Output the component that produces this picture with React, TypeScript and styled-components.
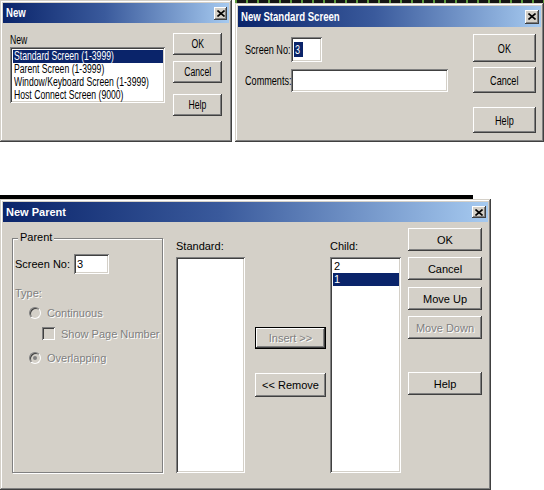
import styled, { createGlobalStyle, css } from 'styled-components'

const FACE = '#d4d0c8'
const SHADOW = '#808080'
const DARK = '#404040'
const NAVY = '#0a246a'

const FONT = `"Liberation Sans", Arial, sans-serif`

const GlobalStyle = createGlobalStyle`
  * { box-sizing: border-box; }
  body {
    margin: 0;
    background: #fff;
  }
`

const raised = css`
  box-shadow: inset -1px -1px ${DARK}, inset 1px 1px #fff,
    inset -2px -2px ${SHADOW}, inset 2px 2px ${FACE};
`

const sunken = css`
  box-shadow: inset 1px 1px ${SHADOW}, inset -1px -1px #fff,
    inset 2px 2px ${DARK}, inset -2px -2px ${FACE};
`

const Page = styled.div`
  width: 544px;
  height: 490px;
  overflow: hidden;
  display: flex;
  flex-direction: column;
`

const TopRow = styled.div`
  display: flex;
  gap: 3px;
  height: 142px;
`

const Stack = styled.div`
  display: flex;
  flex-direction: column;
`

const Ruler = styled.div<{ $w: number }>`
  width: ${p => p.$w}px;
  height: 3px;
  background: repeating-linear-gradient(90deg, #5c9a3c 0 2px, #141414 2px 11px);
`

const Band = styled.div`
  width: 473px;
  height: 4px;
  margin-top: 53px;
  background: #000;
`

// the two small dialogs use a condensed face; squeeze the text horizontally
const Narrow = styled.span<{ $scale?: number; $origin?: string }>`
  display: inline-block;
  white-space: nowrap;
  transform: scaleX(${p => p.$scale ?? 0.72});
  transform-origin: ${p => p.$origin ?? 'left'} center;
`

const Window = styled.div<{ $w: number; $h: number; $size: number }>`
  width: ${p => p.$w}px;
  height: ${p => p.$h}px;
  padding: 3px;
  display: flex;
  flex-direction: column;
  background: ${FACE};
  color: #000;
  font-family: ${FONT};
  font-size: ${p => p.$size}px;
  box-shadow: inset -1px -1px ${DARK}, inset 1px 1px ${FACE},
    inset -2px -2px ${SHADOW}, inset 2px 2px #fff;
`

const TitleBar = styled.div<{ $h: number }>`
  height: ${p => p.$h}px;
  flex-shrink: 0;
  display: flex;
  align-items: center;
  justify-content: space-between;
  padding: 0 2px 0 3px;
  background: linear-gradient(90deg, ${NAVY} 0%, #3a5a9c 45%, #a6caf0 100%);
  color: #fff;
  font-weight: bold;
  overflow: hidden;
`

const TitleText = styled.span<{ $size?: number }>`
  flex: 1;
  min-width: 0;
  white-space: nowrap;
  font-size: ${p => (p.$size ? `${p.$size}px` : 'inherit')};
`

const CloseBox = styled.div<{ $w: number; $h: number }>`
  width: ${p => p.$w}px;
  height: ${p => p.$h}px;
  flex-shrink: 0;
  display: flex;
  align-items: center;
  justify-content: center;
  background: ${FACE};
  ${raised}
`

const Close = ({ w = 14, h = 13 }: { w?: number; h?: number }) => (
  <CloseBox $w={w} $h={h}>
    <svg width="8" height="7" viewBox="0 0 8 7">
      <path d="M0.5 0.5 L7.5 6.5 M7.5 0.5 L0.5 6.5" stroke="#000" strokeWidth="1.6" />
    </svg>
  </CloseBox>
)

const Body = styled.div<{ $pad: string }>`
  flex: 1;
  display: flex;
  padding: ${p => p.$pad};
  min-height: 0;
`

const Column = styled.div<{ $w?: number; $ml?: number; $mt?: number; $gap?: number }>`
  display: flex;
  flex-direction: column;
  width: ${p => (p.$w ? `${p.$w}px` : 'auto')};
  flex: ${p => (p.$w ? '0 0 auto' : '1')};
  margin-left: ${p => p.$ml ?? 0}px;
  margin-top: ${p => p.$mt ?? 0}px;
  gap: ${p => p.$gap ?? 0}px;
`

const Label = styled.div<{ $lh?: number; $w?: number; $mt?: number; $disabled?: boolean }>`
  line-height: ${p => p.$lh ?? 13}px;
  width: ${p => (p.$w ? `${p.$w}px` : 'auto')};
  margin-top: ${p => p.$mt ?? 0}px;
  white-space: nowrap;
  flex-shrink: 0;
  ${p =>
    p.$disabled &&
    css`
      color: ${SHADOW};
      text-shadow: 1px 1px #fff;
    `}
`

const Button = styled.button<{ $h?: number; $mt?: number; $framed?: boolean }>`
  width: 100%;
  height: ${p => p.$h ?? 23}px;
  margin-top: ${p => p.$mt ?? 0}px;
  padding: 0;
  border: ${p => (p.$framed ? '1px solid #000' : 'none')};
  background: ${FACE};
  font: inherit;
  color: #000;
  overflow: hidden;
  ${raised}
  &:disabled {
    color: ${SHADOW};
    text-shadow: 1px 1px #fff;
  }
`

const Field = styled.div<{ $w: number; $h: number }>`
  width: ${p => p.$w}px;
  height: ${p => p.$h}px;
  flex-shrink: 0;
  display: flex;
  align-items: center;
  padding: 0 3px;
  background: #fff;
  ${sunken}
`

const Selection = styled.span`
  background: ${NAVY};
  color: #fff;
  padding: 0 1px;
`

const ListBox = styled.div<{ $h?: number; $mt?: number }>`
  height: ${p => (p.$h ? `${p.$h}px` : 'auto')};
  flex: ${p => (p.$h ? '0 0 auto' : '1')};
  margin-top: ${p => p.$mt ?? 0}px;
  padding: 3px 2px 2px 3px;
  background: #fff;
  overflow: hidden;
  ${sunken}
`

const ListItem = styled.div<{ $selected?: boolean; $lh?: number }>`
  line-height: ${p => p.$lh ?? 13}px;
  padding-left: 1px;
  white-space: nowrap;
  background: ${p => (p.$selected ? NAVY : 'transparent')};
  color: ${p => (p.$selected ? '#fff' : '#000')};
`

const FormRow = styled.div<{ $mt?: number }>`
  display: flex;
  align-items: center;
  margin-top: ${p => p.$mt ?? 0}px;
`

const GroupBox = styled.div`
  position: relative;
  width: 151px;
  margin-top: 10px;
  padding: 15px 0 0 2px;
  display: flex;
  flex-direction: column;
  border: 1px solid ${SHADOW};
  box-shadow: inset 1px 1px #fff, 1px 1px #fff;
`

const Legend = styled.span`
  position: absolute;
  top: -8px;
  left: 5px;
  padding: 0 2px;
  background: ${FACE};
  line-height: 13px;
`

const OptionRow = styled.div<{ $indent: number; $mt: number }>`
  display: flex;
  align-items: center;
  gap: 6px;
  height: 13px;
  padding-left: ${p => p.$indent}px;
  margin-top: ${p => p.$mt}px;
  color: ${SHADOW};
  text-shadow: 1px 1px #fff;
  white-space: nowrap;
`

const Radio = styled.span<{ $checked?: boolean }>`
  width: 12px;
  height: 12px;
  flex-shrink: 0;
  border-radius: 50%;
  display: flex;
  align-items: center;
  justify-content: center;
  background: ${FACE};
  border: 1px solid;
  border-color: ${SHADOW} #fff #fff ${SHADOW};
  box-shadow: inset 1px 1px ${DARK};
  text-shadow: none;
  &::after {
    content: '';
    width: 4px;
    height: 4px;
    border-radius: 50%;
    background: ${p => (p.$checked ? SHADOW : 'transparent')};
  }
`

const Check = styled.span`
  width: 13px;
  height: 13px;
  flex-shrink: 0;
  background: ${FACE};
  ${sunken}
`

const newItems = [
  'Standard Screen (1-3999)',
  'Parent Screen (1-3999)',
  'Window/Keyboard Screen (1-3999)',
  'Host Connect Screen (9000)',
]

const NewDialog = () => (
  <Window $w={233} $h={142} $size={12}>
    <TitleBar $h={20}>
      <TitleText>
        <Narrow $scale={0.8}>New</Narrow>
      </TitleText>
      <Close w={13} h={13} />
    </TitleBar>
    <Body $pad="10px 0 0 7px">
      <Column $w={155}>
        <Label $lh={14}>
          <Narrow>New</Narrow>
        </Label>
        <ListBox $h={56}>
          {newItems.map((item, i) => (
            <ListItem key={item} $selected={i === 0}>
              <Narrow>{item}</Narrow>
            </ListItem>
          ))}
        </ListBox>
      </Column>
      <Column $w={49} $ml={8}>
        <Button $h={22}>
          <Narrow $origin="center">OK</Narrow>
        </Button>
        <Button $h={22} $mt={6}>
          <Narrow $origin="center">Cancel</Narrow>
        </Button>
        <Button $h={22} $mt={11}>
          <Narrow $origin="center">Help</Narrow>
        </Button>
      </Column>
    </Body>
  </Window>
)

const StandardDialog = () => (
  <Stack>
    <Ruler $w={309} />
    <Window $w={309} $h={139} $size={13}>
      <TitleBar $h={21}>
        <TitleText $size={12}>
          <Narrow $scale={0.8}>New Standard Screen</Narrow>
        </TitleText>
        <Close w={14} h={14} />
      </TitleBar>
      <Body $pad="7px 5px 0 7px">
        <Column $mt={3} $gap={7}>
          <FormRow>
            <Label $w={46}>
              <Narrow $scale={0.7}>Screen No:</Narrow>
            </Label>
            <Field $w={31} $h={25}>
              <Selection>
                <Narrow $scale={0.7}>3</Narrow>
              </Selection>
            </Field>
          </FormRow>
          <FormRow>
            <Label $w={46}>
              <Narrow $scale={0.7}>Comments:</Narrow>
            </Label>
            <Field $w={157} $h={23} />
          </FormRow>
        </Column>
        <Column $w={63}>
          <Button $h={28}>
            <Narrow $scale={0.7} $origin="center">OK</Narrow>
          </Button>
          <Button $h={26} $mt={5}>
            <Narrow $scale={0.7} $origin="center">Cancel</Narrow>
          </Button>
          <Button $h={26} $mt={14}>
            <Narrow $scale={0.7} $origin="center">Help</Narrow>
          </Button>
        </Column>
      </Body>
    </Window>
  </Stack>
)

const ParentDialog = () => (
  <Window $w={491} $h={291} $size={11}>
    <TitleBar $h={20}>
      <TitleText>New Parent</TitleText>
      <Close w={14} h={12} />
    </TitleBar>
    <Body $pad="6px 6px 14px 9px">
      <GroupBox>
        <Legend>Parent</Legend>
        <FormRow>
          <Label $w={59}>Screen No:</Label>
          <Field $w={35} $h={20}>3</Field>
        </FormRow>
        <Label $mt={13} $disabled>
          Type:
        </Label>
        <OptionRow $indent={14} $mt={6}>
          <Radio />
          Continuous
        </OptionRow>
        <OptionRow $indent={27} $mt={8}>
          <Check />
          Show Page Number
        </OptionRow>
        <OptionRow $indent={14} $mt={11}>
          <Radio $checked />
          Overlapping
        </OptionRow>
      </GroupBox>

      <Column $w={69} $ml={13}>
        <Label $mt={12}>Standard:</Label>
        <ListBox $mt={4} />
      </Column>

      <Column $w={71} $ml={10}>
        <Button $h={22} $mt={99} $framed disabled>
          Insert &gt;&gt;
        </Button>
        <Button $h={24} $mt={24}>
          &lt;&lt; Remove
        </Button>
      </Column>

      <Column $w={71} $ml={4}>
        <Label $mt={12}>Child:</Label>
        <ListBox $mt={4}>
          <ListItem>2</ListItem>
          <ListItem $selected>1</ListItem>
        </ListBox>
      </Column>

      <Column $w={74} $ml={7}>
        <Button>OK</Button>
        <Button $mt={6}>Cancel</Button>
        <Button $mt={7}>Move Up</Button>
        <Button $mt={6} disabled>
          Move Down
        </Button>
        <Button $mt={33}>Help</Button>
      </Column>
    </Body>
  </Window>
)

export default function App() {
  return (
    <>
      <GlobalStyle />
      <Page>
        <TopRow>
          <NewDialog />
          <StandardDialog />
        </TopRow>
        <Band />
        <ParentDialog />
      </Page>
    </>
  )
}
